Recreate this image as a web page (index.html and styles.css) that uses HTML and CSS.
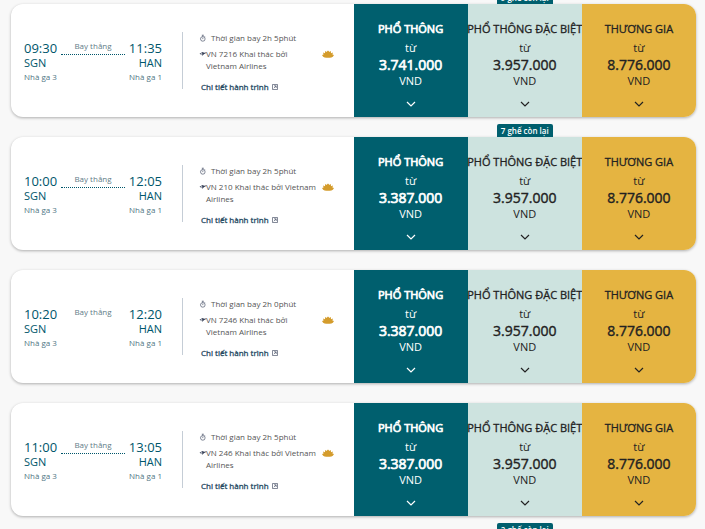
FILE: index.html
```
<!DOCTYPE html>
<html lang="vi">
<head>
    <meta charset="UTF-8">
    <meta name="viewport" content="width=device-width, initial-scale=1.0">
    <title>Chọn chuyến bay</title>
    <link rel="stylesheet" href="styles.css">
</head>
<body>
    <svg class="sprite" aria-hidden="true">
        <symbol id="clock" viewBox="0 0 8 8">
            <circle cx="3.8" cy="4.9" r="2.3" fill="none" stroke="currentColor" stroke-width="0.6"/>
            <path d="M2.8 1.2h2M3.8 1.2v1.4M3.8 3.6v1.5M5.6 2.4l0.7 0.7" fill="none" stroke="currentColor" stroke-width="0.6"/>
        </symbol>
        <symbol id="plane" viewBox="0 0 8 8">
            <path d="M0.6 3.1L1.3 3L2.2 3.7L3.6 3.3L2 2L3 1.9L5.4 2.8L6.9 2.5Q7.8 2.6 7.2 3.1L5.2 3.9L3.5 5.6L2.8 5.7L3.5 4.3L1.6 4.6Z" fill="currentColor"/>
        </symbol>
        <symbol id="external" viewBox="0 0 8 8">
            <path d="M1.5 1.5H6.5V6.5H1.5ZM2.8 5.2L5 3M3 2.8H5.2V5" fill="none" stroke="currentColor" stroke-width="0.6"/>
        </symbol>
        <symbol id="lotus" viewBox="0 0 12 8">
            <path d="M4.8 2L5.2 0.4L6 1.4L6.8 0.4L7.2 2L8.8 1L9 3.2L11 2.4L10.4 4.6L12 4.9Q11 7 9.4 7.4Q6 7.9 2.6 7.4Q1 7 0 4.9L1.6 4.6L1 2.4L3 3.2L3.2 1Z" fill="#d49c2c"/>
        </symbol>
        <symbol id="chevron" viewBox="0 0 10 6">
            <path d="M1 1L5 5L9 1" fill="none" stroke="currentColor" stroke-width="1.2"/>
        </symbol>
    </svg>

    <main class="flights">
        <article class="flight">
            <div class="info">
                <div class="route">
                    <div class="stop"><span class="time">09:30</span><span class="code">SGN</span><span class="terminal">Nhà ga 3</span></div>
                    <div class="direct">Bay thẳng</div>
                    <div class="stop arrive"><span class="time">11:35</span><span class="code">HAN</span><span class="terminal">Nhà ga 1</span></div>
                </div>
                <div class="details">
                    <p class="duration"><svg class="icon"><use href="#clock"/></svg>Thời gian bay 2h 5phút</p>
                    <div class="operator"><svg class="icon"><use href="#plane"/></svg><p>VN 7216 Khai thác bởi Vietnam Airlines</p><svg class="lotus"><use href="#lotus"/></svg></div>
                    <a href="#" class="more">Chi tiết hành trình<svg class="icon"><use href="#external"/></svg></a>
                </div>
            </div>
            <button class="fare economy"><span class="cabin">PHỔ THÔNG</span><span class="from">từ</span><span class="price">3.741.000</span><span class="currency">VND</span><svg class="chevron"><use href="#chevron"/></svg></button>
            <button class="fare premium"><span class="seats">9 ghế còn lại</span><span class="cabin">PHỔ THÔNG ĐẶC BIỆT</span><span class="from">từ</span><span class="price">3.957.000</span><span class="currency">VND</span><svg class="chevron"><use href="#chevron"/></svg></button>
            <button class="fare business"><span class="cabin">THƯƠNG GIA</span><span class="from">từ</span><span class="price">8.776.000</span><span class="currency">VND</span><svg class="chevron"><use href="#chevron"/></svg></button>
        </article>

        <article class="flight">
            <div class="info">
                <div class="route">
                    <div class="stop"><span class="time">10:00</span><span class="code">SGN</span><span class="terminal">Nhà ga 3</span></div>
                    <div class="direct">Bay thẳng</div>
                    <div class="stop arrive"><span class="time">12:05</span><span class="code">HAN</span><span class="terminal">Nhà ga 1</span></div>
                </div>
                <div class="details">
                    <p class="duration"><svg class="icon"><use href="#clock"/></svg>Thời gian bay 2h 5phút</p>
                    <div class="operator"><svg class="icon"><use href="#plane"/></svg><p>VN 210 Khai thác bởi Vietnam Airlines</p><svg class="lotus"><use href="#lotus"/></svg></div>
                    <a href="#" class="more">Chi tiết hành trình<svg class="icon"><use href="#external"/></svg></a>
                </div>
            </div>
            <button class="fare economy"><span class="cabin">PHỔ THÔNG</span><span class="from">từ</span><span class="price">3.387.000</span><span class="currency">VND</span><svg class="chevron"><use href="#chevron"/></svg></button>
            <button class="fare premium"><span class="seats">7 ghế còn lại</span><span class="cabin">PHỔ THÔNG ĐẶC BIỆT</span><span class="from">từ</span><span class="price">3.957.000</span><span class="currency">VND</span><svg class="chevron"><use href="#chevron"/></svg></button>
            <button class="fare business"><span class="cabin">THƯƠNG GIA</span><span class="from">từ</span><span class="price">8.776.000</span><span class="currency">VND</span><svg class="chevron"><use href="#chevron"/></svg></button>
        </article>

        <article class="flight">
            <div class="info">
                <div class="route">
                    <div class="stop"><span class="time">10:20</span><span class="code">SGN</span><span class="terminal">Nhà ga 3</span></div>
                    <div class="direct no-line">Bay thẳng</div>
                    <div class="stop arrive"><span class="time">12:20</span><span class="code">HAN</span><span class="terminal">Nhà ga 1</span></div>
                </div>
                <div class="details">
                    <p class="duration"><svg class="icon"><use href="#clock"/></svg>Thời gian bay 2h 0phút</p>
                    <div class="operator"><svg class="icon"><use href="#plane"/></svg><p>VN 7246 Khai thác bởi Vietnam Airlines</p><svg class="lotus"><use href="#lotus"/></svg></div>
                    <a href="#" class="more">Chi tiết hành trình<svg class="icon"><use href="#external"/></svg></a>
                </div>
            </div>
            <button class="fare economy"><span class="cabin">PHỔ THÔNG</span><span class="from">từ</span><span class="price">3.387.000</span><span class="currency">VND</span><svg class="chevron"><use href="#chevron"/></svg></button>
            <button class="fare premium"><span class="cabin">PHỔ THÔNG ĐẶC BIỆT</span><span class="from">từ</span><span class="price">3.957.000</span><span class="currency">VND</span><svg class="chevron"><use href="#chevron"/></svg></button>
            <button class="fare business"><span class="cabin">THƯƠNG GIA</span><span class="from">từ</span><span class="price">8.776.000</span><span class="currency">VND</span><svg class="chevron"><use href="#chevron"/></svg></button>
        </article>

        <article class="flight">
            <div class="info">
                <div class="route">
                    <div class="stop"><span class="time">11:00</span><span class="code">SGN</span><span class="terminal">Nhà ga 3</span></div>
                    <div class="direct">Bay thẳng</div>
                    <div class="stop arrive"><span class="time">13:05</span><span class="code">HAN</span><span class="terminal">Nhà ga 1</span></div>
                </div>
                <div class="details">
                    <p class="duration"><svg class="icon"><use href="#clock"/></svg>Thời gian bay 2h 5phút</p>
                    <div class="operator"><svg class="icon"><use href="#plane"/></svg><p>VN 246 Khai thác bởi Vietnam Airlines</p><svg class="lotus"><use href="#lotus"/></svg></div>
                    <a href="#" class="more">Chi tiết hành trình<svg class="icon"><use href="#external"/></svg></a>
                </div>
            </div>
            <button class="fare economy"><span class="cabin">PHỔ THÔNG</span><span class="from">từ</span><span class="price">3.387.000</span><span class="currency">VND</span><svg class="chevron"><use href="#chevron"/></svg></button>
            <button class="fare premium"><span class="cabin">PHỔ THÔNG ĐẶC BIỆT</span><span class="from">từ</span><span class="price">3.957.000</span><span class="currency">VND</span><svg class="chevron"><use href="#chevron"/></svg></button>
            <button class="fare business"><span class="cabin">THƯƠNG GIA</span><span class="from">từ</span><span class="price">8.776.000</span><span class="currency">VND</span><svg class="chevron"><use href="#chevron"/></svg></button>
        </article>

        <article class="flight">
            <div class="info"></div>
            <div class="fare economy"></div>
            <div class="fare premium"><span class="seats">2 ghế còn lại</span></div>
            <div class="fare business"></div>
        </article>
    </main>
</body>
</html>
```
FILE: styles.css
```
* {
    box-sizing: border-box;
}
body {
    font-family: "Open Sans", sans-serif;
    background-color: #f8f8f8;
    color: #005f6e;
    margin: 0;
    height: 100vh;
    overflow: hidden;
}
p {
    margin: 0;
}
.sprite {
    display: none;
}
.flights {
    display: flex;
    flex-direction: column;
    gap: 20px;
    padding: 4px 9px 0 11px;
}
.flight {
    display: grid;
    grid-template-columns: 3fr 1fr 1fr 1fr;
    min-height: 113px;
    border-radius: 12px;
    background-color: #fff;
    box-shadow: 0 1px 3px rgba(0, 0, 0, 0.3);
}
.info {
    display: flex;
    align-items: center;
    padding-left: 13px;
}
.route {
    display: flex;
    flex: 0 0 138px;
    justify-content: space-between;
    padding-top: 2px;
}
.stop {
    display: flex;
    flex-direction: column;
    color: #00566b;
}
.arrive {
    text-align: right;
}
.time {
    font-size: 13px;
    line-height: 16px;
}
.code {
    font-size: 11px;
    line-height: 14px;
}
.terminal {
    font-size: 8px;
    line-height: 13px;
    color: #4f7583;
}
.direct {
    align-self: flex-start;
    width: 64px;
    padding-bottom: 2px;
    border-bottom: 1px dotted #00566b;
    font-size: 8px;
    line-height: 12px;
    text-align: center;
    color: #5f7d88;
}
.no-line {
    border-bottom: 0;
}
.details {
    flex: 1;
    margin-left: 20px;
    padding: 0 20px 0 16px;
    border-left: 1px solid #c5cdd6;
    height: 57px;
    font-size: 8px;
    line-height: 12px;
    color: #555;
}
.icon {
    flex: none;
    width: 8px;
    height: 8px;
    color: #333d55;
}
.duration {
    display: flex;
    align-items: center;
    gap: 4px;
}
.operator {
    display: flex;
    align-items: flex-start;
    margin-top: 4px;
}
.operator .icon {
    margin-top: 2px;
    margin-right: -1px;
}
.operator p {
    flex: 1;
}
.lotus {
    flex: none;
    width: 12px;
    height: 8px;
    margin: 2px 0 0 4px;
}
.more {
    display: flex;
    align-items: center;
    gap: 2px;
    margin: 9px 0 0 2px;
    -webkit-text-stroke: 0.3px;
    color: #24485f;
    text-decoration: none;
}
.fare {
    display: flex;
    flex-direction: column;
    align-items: center;
    position: relative;
    min-width: 0;
    margin: 0;
    padding: 17px 0 8px;
    border: 0;
    font-family: inherit;
    font-size: 11px;
    line-height: 16px;
    color: #222;
    white-space: nowrap;
    cursor: pointer;
}
.economy {
    background-color: #005f6e;
    color: #fff;
}
.premium {
    background-color: #cde3df;
}
.business {
    background-color: #e5b441;
    border-radius: 0 12px 12px 0;
}
.cabin {
    margin-bottom: 3px;
    -webkit-text-stroke: 0.3px;
}
.price {
    font-size: 14px;
    line-height: 17px;
    -webkit-text-stroke: 0.4px;
}
.economy .cabin,
.economy .price {
    -webkit-text-stroke: 0.7px;
}
.chevron {
    width: 10px;
    height: 6px;
    margin-top: 12px;
}
/* remaining seats tag, sits on top of the fare */
.seats {
    position: absolute;
    bottom: 100%;
    left: 50%;
    transform: translateX(-50%);
    padding: 0 4px;
    border-radius: 2px 2px 0 0;
    background-color: #005f6e;
    color: #fff;
    font-size: 8px;
    font-weight: 600;
    line-height: 13px;
}
```
